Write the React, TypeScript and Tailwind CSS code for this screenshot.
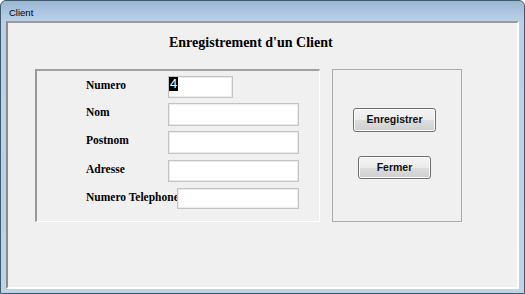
import React from "react";

type Field = {
  label: string;
  rowClass: string;
  labelClass: string;
  boxClass: string;
  value?: string;
};

const fields: Field[] = [
  { label: "Numero", rowClass: "mt-[5px] h-[22px]", labelClass: "w-[82px]", boxClass: "w-[65px] h-[22px]", value: "4" },
  { label: "Nom", rowClass: "mt-[5px] h-[23px]", labelClass: "w-[82px]", boxClass: "w-[131px] h-[23px]" },
  { label: "Postnom", rowClass: "mt-[5px] h-[23px]", labelClass: "w-[82px]", boxClass: "w-[131px] h-[23px]" },
  { label: "Adresse", rowClass: "mt-[6px] h-[22px]", labelClass: "w-[82px]", boxClass: "w-[131px] h-[22px]" },
  { label: "Numero Telephone", rowClass: "mt-[6px] h-[21px]", labelClass: "w-[91px]", boxClass: "w-[122px] h-[21px]" },
];

const serif = "font-['Liberation_Serif','Times_New_Roman',serif]";
const sans = "font-['Liberation_Sans',Arial,sans-serif]";

const WinButton: React.FC<{ label: string; className: string }> = ({ label, className }) => (
  <button
    className={`${className} ${sans} flex items-center justify-center rounded-[3px] border border-[#707070] bg-[linear-gradient(to_bottom,#f4f4f4_0%,#ebebeb_50%,#dddddd_51%,#cfcfcf_100%)] text-[10.5px] font-bold text-[#111] shadow-[inset_0_0_0_1px_#fcfcfc]`}
  >
    {label}
  </button>
);

export default function App() {
  return (
    <div className="flex h-[294px] w-[525px] flex-col overflow-hidden rounded-t-[6px] border border-[#3d5b6b] bg-[linear-gradient(to_bottom,#9bb7d5_0px,#bad0e8_20px,#bcd3ea_100%)] px-[5px] pb-[4px]">
      {/* Title bar */}
      <div className={`h-[20px] shrink-0 pl-[3px] pt-[6px] text-[9.5px] leading-[11px] text-black ${sans}`}>Client</div>

      {/* Client area */}
      <div className="flex-1 border-2 border-t-[#9a9a9a] border-l-[#8c8c8c] border-r-white border-b-white bg-[#f0f0f0]">
        <h1 className={`${serif} mt-[12px] pl-[161px] text-[14px] font-bold leading-[16px] text-black`}>
          Enregistrement d'un Client
        </h1>

        <div className="mt-[18px] flex gap-[12px] pl-[27px]">
          {/* Form group */}
          <div className="h-[153px] w-[285px] border-t-2 border-l-2 border-r border-b border-t-[#a0a0a0] border-l-[#9a9a9a] border-r-white border-b-white">
            <div className="flex flex-col pl-[49px]">
              {fields.map((f) => (
                <div key={f.label} className={`flex ${f.rowClass}`}>
                  <div
                    className={`${f.labelClass} ${serif} shrink-0 whitespace-nowrap pt-[2px] text-[11.5px] font-bold leading-[14px] text-black`}
                  >
                    {f.label}
                  </div>
                  {/* relative so the box paints over a label that runs into it */}
                  <div className={`${f.boxClass} relative flex items-start border border-[#c3c3c3] bg-white shadow-[inset_0_0_0_1px_#ececec]`}>
                    {f.value && (
                      <span className={`${sans} block bg-black px-[1px] text-[13px] leading-[14px] text-white`}>
                        {f.value}
                      </span>
                    )}
                  </div>
                </div>
              ))}
            </div>
          </div>

          {/* Buttons group */}
          <div className="flex h-[153px] w-[130px] flex-col border border-[#aaaaaa]">
            <WinButton label="Enregistrer" className="ml-[20px] mt-[38px] h-[24px] w-[83px]" />
            <WinButton label="Fermer" className="ml-[25px] mt-[24px] h-[23px] w-[73px]" />
          </div>
        </div>
      </div>
    </div>
  );
}
